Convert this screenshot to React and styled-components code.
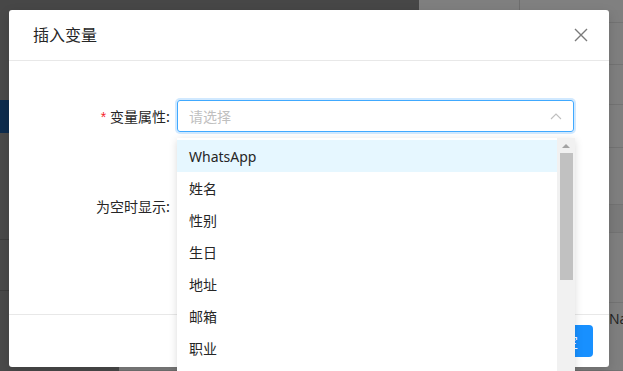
import React from 'react';
import styled, { createGlobalStyle } from 'styled-components';

const GlobalStyle = createGlobalStyle`
    *, *::before, *::after {
        box-sizing: border-box;
    }
    html, body {
        margin: 0;
        padding: 0;
        background: #7f7f7f;
    }
    body {
        font-family: "Noto Sans", "Noto Sans CJK SC", sans-serif;
        font-size: 14px;
    }
`;

const Page = styled.div`
    position: relative;
    width: 623px;
    height: 371px;
    overflow: hidden;
`;

const Background = styled.div`
    display: grid;
    grid-template-columns: 119px 1fr;
    grid-template-rows: 10px 1fr;
    height: 100%;
`;

const TopBar = styled.div`
    grid-column: 1 / 3;
    display: grid;
    grid-template-columns: 419px 100px 1fr;
`;

const TopCell = styled.div`
    background: ${({ $bg }) => $bg};
    border-left: ${({ $line }) => ($line ? '1px solid #6e6e6e' : 'none')};
`;

const Sidebar = styled.div`
    background: #4a4a4a;
    display: flex;
    flex-direction: column;
    padding-top: 90px;
`;

const NavActive = styled.div`
    height: 33px;
    background: #0d2c4e;
`;

const NavLine = styled.div`
    margin-top: ${({ $gap }) => $gap}px;
    height: 1px;
    background: #3e3e3e;
`;

const Main = styled.div`
    background: #7f7f7f;
    display: flex;
    flex-direction: column;
`;

const Row = styled.div`
    height: ${({ $h }) => $h}px;
    flex: none;
    border-bottom: 1px solid #737373;
    background: ${({ $bg }) => $bg || 'transparent'};
    font-family: "Open Sans", sans-serif;
    font-size: 14px;
    color: #1f1f1f;
    padding: 6px 0 0 490px;
`;

const Layer = styled.div`
    position: absolute;
    inset: 0;
    padding: 10px 0 0 9px;
`;

const Modal = styled.div`
    position: relative;
    width: 600px;
    height: 357px;
    background: #fff;
    border-radius: 3px;
    display: flex;
    flex-direction: column;
    box-shadow: 0 4px 12px rgba(0, 0, 0, 0.15);
`;

const Header = styled.div`
    height: 51px;
    border-bottom: 1px solid #e8e8e8;
    display: flex;
    align-items: center;
    justify-content: space-between;
    padding: 0 20px 0 24px;
`;

const Title = styled.div`
    font-family: "Noto Sans CJK SC", sans-serif;
    font-size: 16px;
    color: #262626;
    padding-bottom: 2px;
`;

const Close = styled.div`
    width: 16px;
    height: 16px;
    display: flex;
    align-items: center;
    justify-content: center;
`;

const Body = styled.div`
    flex: 1;
    padding: 39px 0 0;
    display: flex;
    flex-direction: column;
    gap: 64px;
`;

const FormRow = styled.div`
    display: grid;
    grid-template-columns: 168px 397px;
    align-items: center;
`;

const Label = styled.div`
    font-family: "Noto Sans CJK SC", sans-serif;
    font-size: 14px;
    color: #262626;
    text-align: right;
    padding-right: 7px;
`;

const Star = styled.span`
    color: #f5222d;
    margin-right: 4px;
    font-family: "Liberation Sans", sans-serif;
`;

const Select = styled.div`
    height: 32px;
    border: 1px solid #40a9ff;
    border-radius: 3px;
    box-shadow: 0 0 0 2px rgba(24, 144, 255, 0.2);
    display: flex;
    align-items: center;
    justify-content: space-between;
    padding: 0 11px;
`;

const Placeholder = styled.span`
    font-family: "Noto Sans CJK SC", sans-serif;
    color: #bfbfbf;
`;

const Footer = styled.div`
    height: 53px;
    border-top: 1px solid #e8e8e8;
    display: flex;
    justify-content: flex-end;
    align-items: flex-start;
    padding: 10px 16px 0;
`;

const Button = styled.div`
    height: 32px;
    padding: 0 15px;
    border-radius: 4px;
    background: #1890ff;
    color: #fff;
    font-family: "Noto Sans CJK SC", sans-serif;
    display: flex;
    align-items: center;
`;

const Dropdown = styled.div`
    position: absolute;
    left: 168px;
    top: 128px;
    width: 398px;
    height: 245px;
    background: #fff;
    box-shadow: 0 2px 8px rgba(0, 0, 0, 0.15);
    display: flex;
    padding-top: 2px;
`;

const List = styled.div`
    flex: 1;
    display: flex;
    flex-direction: column;
`;

const Item = styled.div`
    height: 32px;
    flex: none;
    display: flex;
    align-items: center;
    padding: 0 12px;
    color: #262626;
    font-family: "Noto Sans", "Noto Sans CJK SC", sans-serif;
    font-size: 14px;
    background: ${({ $active }) => ($active ? '#e6f7ff' : '#fff')};
`;

const Scrollbar = styled.div`
    width: 18px;
    margin-top: -2px;
    background: #f1f1f1;
    display: flex;
    flex-direction: column;
    align-items: center;
    padding-top: 6px;
`;

const Arrow = styled.div`
    width: 0;
    height: 0;
    border-left: 4px solid transparent;
    border-right: 4px solid transparent;
    border-bottom: 4px solid #a3a3a3;
    margin-bottom: 5px;
`;

const Thumb = styled.div`
    width: 13px;
    height: 127px;
    background: #c1c1c1;
`;

const options = ['WhatsApp', '姓名', '性别', '生日', '地址', '邮箱', '职业', '公司'];

const App = () => {
    return (
        <Page>
            <GlobalStyle />
            <Background>
                <TopBar>
                    <TopCell $bg="#474747" />
                    <TopCell $bg="#7f7f7f" />
                    <TopCell $bg="#808080" $line />
                </TopBar>
                <Sidebar>
                    <NavActive />
                    <NavLine $gap={106} />
                    <NavLine $gap={50} />
                </Sidebar>
                <Main>
                    <Row $h={13} />
                    <Row $h={42} />
                    <Row $h={40} />
                    <Row $h={43} />
                    <Row $h={57} />
                    <Row $h={28} $bg="#7a7a7a" />
                    <Row $h={70} />
                    <Row $h={68}>Name</Row>
                </Main>
            </Background>
            <Layer>
                <Modal>
                    <Header>
                        <Title>插入变量</Title>
                        <Close>
                            <svg width="14" height="14" viewBox="0 0 14 14">
                                <path d="M1 1L13 13M13 1L1 13" stroke="#7a7a7a" strokeWidth="1.4" fill="none" />
                            </svg>
                        </Close>
                    </Header>
                    <Body>
                        <FormRow>
                            <Label>
                                <Star>*</Star>变量属性:
                            </Label>
                            <Select>
                                <Placeholder>请选择</Placeholder>
                                <svg width="12" height="8" viewBox="0 0 12 8">
                                    <path d="M1 7L6 2L11 7" stroke="#bfbfbf" strokeWidth="1.1" fill="none" />
                                </svg>
                            </Select>
                        </FormRow>
                        <FormRow>
                            <Label>为空时显示:</Label>
                        </FormRow>
                    </Body>
                    <Footer>
                        <Button>确 定</Button>
                    </Footer>
                    <Dropdown>
                        <List>
                            {options.map((o, i) => (
                                <Item key={o} $active={i === 0}>
                                    {o}
                                </Item>
                            ))}
                        </List>
                        <Scrollbar>
                            <Arrow />
                            <Thumb />
                        </Scrollbar>
                    </Dropdown>
                </Modal>
            </Layer>
        </Page>
    );
};

export default App;
